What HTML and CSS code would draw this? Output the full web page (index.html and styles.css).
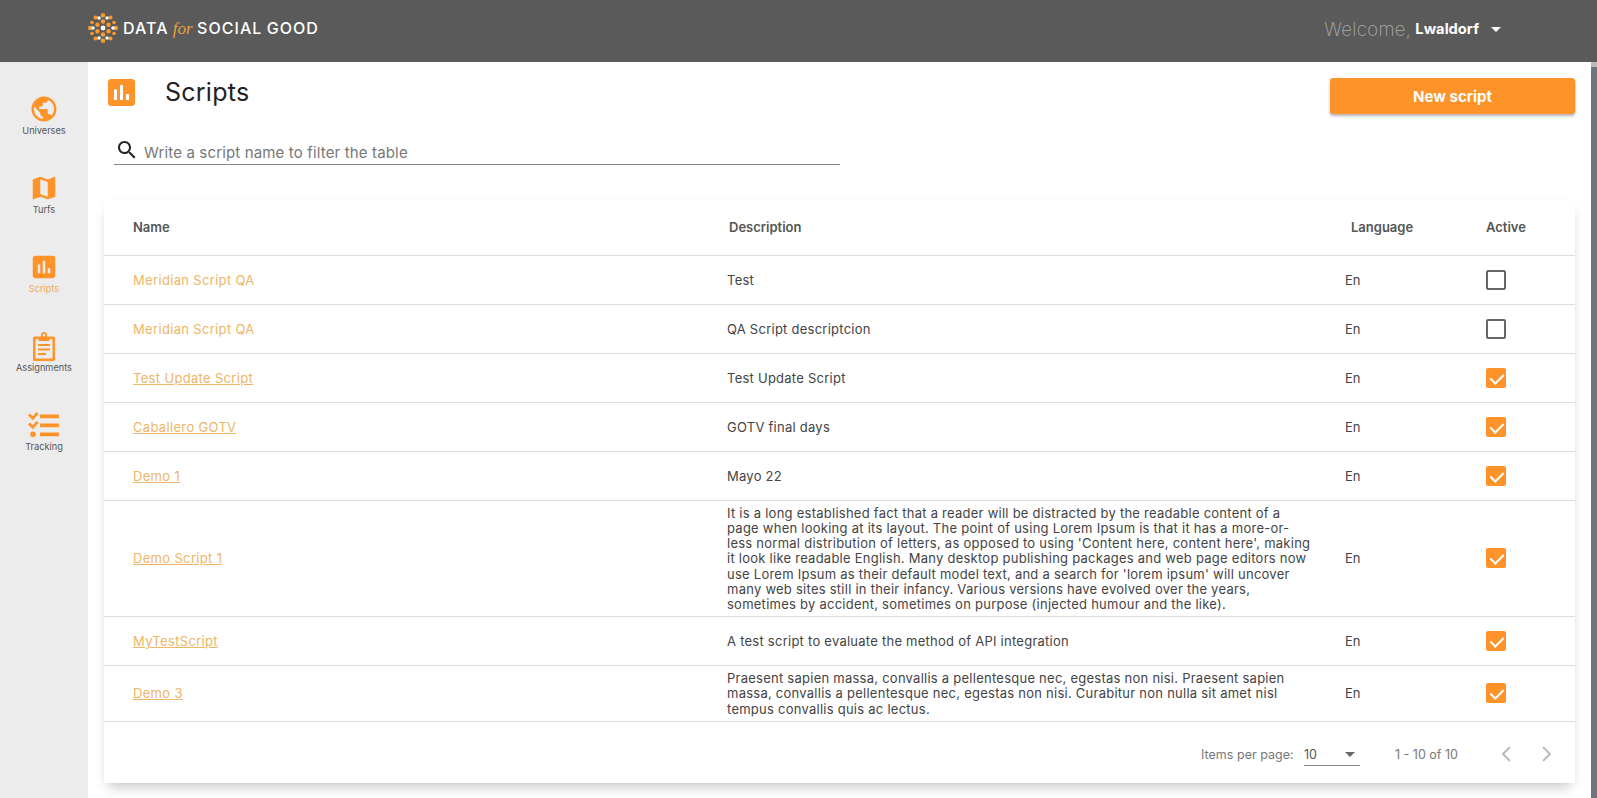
FILE: index.html
```html
<!DOCTYPE html>
<html lang="en">
<head>
<meta charset="utf-8">
<title>Scripts</title>
<link rel="stylesheet" href="styles.css">
</head>
<body>
<header class="topbar">
  <div class="brand">
    <svg class="brand-mark" viewBox="0 0 30 30" aria-hidden="true">
      <g fill="#fd9a2b">
        <circle cx="15" cy="2.200" r="2.200"/><circle cx="15" cy="27.800" r="2.200"/><circle cx="2.200" cy="15" r="2.200"/><circle cx="27.800" cy="15" r="2.200"/>
        <circle cx="7.500" cy="4.500" r="2"/><circle cx="22.500" cy="4.500" r="2"/><circle cx="7.500" cy="25.500" r="2"/><circle cx="22.500" cy="25.500" r="2"/>
        <circle cx="4" cy="9.500" r="1.800"/><circle cx="26" cy="9.500" r="1.800"/><circle cx="4" cy="20.500" r="1.800"/><circle cx="26" cy="20.500" r="1.800"/>
        <circle cx="15" cy="8.500" r="2.200"/><circle cx="15" cy="21.500" r="2.200"/><circle cx="9.500" cy="11.800" r="2.200"/><circle cx="20.500" cy="11.800" r="2.200"/><circle cx="9.500" cy="18.200" r="2.200"/><circle cx="20.500" cy="18.200" r="2.200"/>
      </g>
      <g fill="#fff">
        <circle cx="15" cy="15" r="2.400"/>
        <circle cx="11" cy="5" r="1.800"/><circle cx="19" cy="5" r="1.800"/><circle cx="11" cy="25" r="1.800"/><circle cx="19" cy="25" r="1.800"/>
        <circle cx="5" cy="15" r="1.800"/><circle cx="25" cy="15" r="1.800"/>
      </g>
    </svg>
    <span class="brand-name">DATA <em class="brand-for">for</em> SOCIAL GOOD</span>
  </div>
  <div class="user">
    <span class="welcome">Welcome,</span>
    <strong class="user-name">Lwaldorf</strong>
    <span class="caret"></span>
  </div>
</header>
<div class="shell">
  <nav class="sidenav">
    <a class="nav-item">
      <svg class="nav-icon" viewBox="0 0 24 24"><path d="M12 2C6.480 2 2 6.480 2 12s4.480 10 10 10 10-4.480 10-10S17.520 2 12 2zm-1 17.930c-3.950-.49-7-3.850-7-7.930 0-.62.08-1.210.21-1.790L9 15v1c0 1.100.9 2 2 2v1.930zm6.900-2.540c-.26-.81-1-1.390-1.900-1.390h-1v-3c0-.55-.45-1-1-1H8v-2h2c.55 0 1-.45 1-1V7h2c1.100 0 2-.9 2-2v-.41c2.930 1.190 5 4.060 5 7.410 0 2.080-.8 3.970-2.100 5.390z"/></svg>
      <span>Universes</span>
    </a>
    <a class="nav-item">
      <svg class="nav-icon" viewBox="0 0 24 24"><path d="M20.500 3l-.16.03L15 5.100 9 3 3.360 4.900c-.21.07-.36.25-.36.48V20.500c0 .28.22.5.5.5l.16-.03L9 18.900l6 2.100 5.640-1.900c.21-.07.36-.25.36-.48V3.500c0-.28-.22-.5-.5-.5zM15 19l-6-2.110V5l6 2.110V19z"/></svg>
      <span>Turfs</span>
    </a>
    <a class="nav-item nav-item-active">
      <svg class="nav-icon" viewBox="0 0 24 24"><path d="M19 3H5c-1.100 0-2 .9-2 2v14c0 1.100.9 2 2 2h14c1.100 0 2-.9 2-2V5c0-1.100-.9-2-2-2zM9 17H7v-7h2v7zm4 0h-2V7h2v10zm4 0h-2v-4h2v4z"/></svg>
      <span>Scripts</span>
    </a>
    <a class="nav-item">
      <svg class="nav-icon" viewBox="0 0 30 30"><path d="M12 5.500V4a3 3 0 0 1 6 0v1.500h6a2 2 0 0 1 2 2v21a1.500 1.500 0 0 1-1.500 1.500h-19A1.500 1.500 0 0 1 4 28.500v-21a2 2 0 0 1 2-2zM6.500 8v19.500h17V8h-3v2h-11V8zM15 2.800a1.400 1.400 0 1 0 0 2.800 1.400 1.400 0 0 0 0-2.800zM9 13h12v2H9zm0 4.500h12v2H9zM9 22h8v2H9z"/></svg>
      <span>Assignments</span>
    </a>
    <a class="nav-item">
      <svg class="nav-icon nav-icon-wide" viewBox="0 0 31 25"><path d="M12 2.500h19v3.800H12zM12 11.500h19v3.800H12zM12 20.500h19v3.800H12z"/><path d="M0 3.500 2 1.500l2.800 2.800L8.500 0l2 1.900-5.600 6.300zM0 12.500l2-2 2.800 2.800L8.500 9l2 1.900-5.600 6.300z"/><circle cx="5" cy="22.400" r="2.800"/></svg>
      <span>Tracking</span>
    </a>
  </nav>
  <main class="content">
    <div class="page-head">
      <div class="page-title">
        <svg class="title-icon" viewBox="3 3 18 18"><path d="M19 3H5c-1.100 0-2 .9-2 2v14c0 1.100.9 2 2 2h14c1.100 0 2-.9 2-2V5c0-1.100-.9-2-2-2zM9 17H7v-7h2v7zm4 0h-2V7h2v10zm4 0h-2v-4h2v4z"/></svg>
        <h1>Scripts</h1>
      </div>
      <button class="primary-btn">New script</button>
    </div>
    <div class="filter">
      <svg class="filter-icon" viewBox="0 0 24 24"><path d="M15.500 14h-.79l-.28-.27C15.410 12.590 16 11.110 16 9.500 16 5.910 13.090 3 9.500 3S3 5.910 3 9.500 5.910 16 9.500 16c1.610 0 3.090-.59 4.230-1.570l.27.28v.79l5 4.990L20.490 19l-4.990-5zm-6 0C7.010 14 5 11.990 5 9.500S7.010 5 9.500 5 14 7.010 14 9.500 11.990 14 9.500 14z"/></svg>
      <span class="filter-text">Write a script name to filter the table</span>
    </div>
    <section class="card">
      <table class="scripts">
        <thead>
          <tr><th class="c-name">Name</th><th class="c-desc c-desc-head">Description</th><th class="c-lang c-lang-head">Language</th><th class="c-active">Active</th></tr>
        </thead>
        <tbody>
          <tr><td><a class="link link-plain">Meridian Script QA</a></td><td>Test</td><td>En</td><td><span class="check"></span></td></tr>
          <tr><td><a class="link link-plain">Meridian Script QA</a></td><td>QA Script descriptcion</td><td>En</td><td><span class="check"></span></td></tr>
          <tr><td><a class="link">Test Update Script</a></td><td>Test Update Script</td><td>En</td><td><span class="check check-on"></span></td></tr>
          <tr><td><a class="link">Caballero GOTV</a></td><td>GOTV final days</td><td>En</td><td><span class="check check-on"></span></td></tr>
          <tr><td><a class="link">Demo 1</a></td><td>Mayo 22</td><td>En</td><td><span class="check check-on"></span></td></tr>
          <tr class="row-long"><td><a class="link">Demo Script 1</a></td><td>It is a long established fact that a reader will be distracted by the readable content of a<br>page when looking at its layout. The point of using Lorem Ipsum is that it has a more-or-<br>less normal distribution of letters, as opposed to using 'Content here, content here', making<br>it look like readable English. Many desktop publishing packages and web page editors now<br>use Lorem Ipsum as their default model text, and a search for 'lorem ipsum' will uncover<br>many web sites still in their infancy. Various versions have evolved over the years,<br>sometimes by accident, sometimes on purpose (injected humour and the like).</td><td>En</td><td><span class="check check-on"></span></td></tr>
          <tr><td><a class="link">MyTestScript</a></td><td>A test script to evaluate the method of API integration</td><td>En</td><td><span class="check check-on"></span></td></tr>
          <tr class="row-last"><td><a class="link">Demo 3</a></td><td>Praesent sapien massa, convallis a pellentesque nec, egestas non nisi. Praesent sapien<br>massa, convallis a pellentesque nec, egestas non nisi. Curabitur non nulla sit amet nisl<br>tempus convallis quis ac lectus.</td><td>En</td><td><span class="check check-on"></span></td></tr>
        </tbody>
      </table>
      <div class="pager">
        <span class="pager-label">Items per page:</span>
        <div class="pager-select"><span>10</span><span class="pager-caret"></span></div>
        <span class="pager-range">1 - 10 of 10</span>
        <svg class="pager-arrow" viewBox="0 0 12 18"><path d="M10 2 3 9l7 7"/></svg>
        <svg class="pager-arrow pager-arrow-next" viewBox="0 0 12 18"><path d="M2 2l7 7-7 7"/></svg>
      </div>
    </section>
  </main>
  <div class="scrollbar"><div class="scroll-cap"></div></div>
</div>
</body>
</html>
```
FILE: styles.css
```css
* { box-sizing: border-box; }
html, body { margin: 0; height: 100%; overflow: hidden; }
body { font-family: Inter, "Noto Sans", sans-serif; color: #333; background: #fff; display: flex; flex-direction: column; }

.topbar { height: 62px; flex: none; background: #5a5a5a; display: flex; align-items: center; justify-content: space-between; padding: 0 96px 0 88px; }
.brand { display: flex; align-items: center; gap: 5px; margin-top: -6px; }
.brand-mark { width: 30px; height: 30px; }
.brand-name { color: #fff; font-size: 16px; font-weight: 500; letter-spacing: 1.05px; white-space: nowrap; word-spacing: -1px; }
.brand-for { color: #e9a13b; font-family: "Liberation Serif", serif; font-weight: 400; font-size: 17px; letter-spacing: 0; }
.user { display: flex; align-items: center; gap: 4px; margin-top: -4px; }
.welcome { color: #aaa; font-size: 18.500px; font-weight: 200; letter-spacing: .35px; }
.user-name { color: #fff; font-size: 14.700px; font-weight: 700; }
.caret { margin-left: 8px; border: 5px solid transparent; border-top: 5px solid #fff; border-bottom: 0; }

.shell { flex: 1; min-height: 0; display: flex; }
.sidenav { width: 88px; flex: none; background: #ececec; display: flex; flex-direction: column; align-items: center; padding-top: 27px; gap: 31px; }
.nav-item { height: 48px; display: flex; flex-direction: column; align-items: center; justify-content: flex-end; font-size: 9.200px; line-height: 12px; color: #555; }
.nav-item-active { color: #f0a860; }
.nav-icon { width: 30px; height: 30px; fill: #fd9329; margin-bottom: 1px; flex: none; }
.nav-icon-wide { width: 31px; height: 25px; margin: 2px 0 4px; }

.content { flex: 1; min-width: 0; padding: 16px 16px 0 16px; }
.page-head { display: flex; justify-content: space-between; align-items: flex-start; height: 62px; }
.page-title { display: flex; align-items: center; padding: 1px 0 0 4px; }
.title-icon { width: 27px; height: 27px; fill: #fd9329; }
.page-title h1 { margin: 0 0 0 30px; font-size: 25px; line-height: 27px; font-weight: 400; color: #222; letter-spacing: .25px; }
.primary-btn { width: 245px; height: 36px; border: 0; border-radius: 3px; background: #fd9329; color: #fff; font: 700 15px Inter, sans-serif; box-shadow: 0 2px 3px rgba(0,0,0,.3); }

.filter { width: 726px; height: 25px; margin-left: 10px; display: flex; align-items: center; gap: 5px; border-bottom: 1px solid #8a8a8a; padding: 1px 0 1px 1px; }
.filter-icon { width: 24px; height: 24px; fill: #222; margin-top: -5px; }
.filter-text { color: #777; font-size: 15px; letter-spacing: .15px; }

.card { margin: 35px 0 0 0; height: 583px; background: #fff; box-shadow: 0 8px 12px -4px rgba(0,0,0,.22), 0 0 4px rgba(0,0,0,.02); }
.scripts { width: 100%; border-collapse: collapse; table-layout: fixed; font-size: 13px; color: #444; }
.scripts th { height: 55px; padding: 0; text-align: left; font-weight: 600; font-size: 13px; color: #555; border-bottom: 1px solid #ddd; }
.scripts td { height: 49px; padding: 0; border-bottom: 1px solid #ddd; vertical-align: middle; line-height: 15.200px; }
.scripts td:not(:last-child) { padding-top: 2px; }
.c-name { width: 623px; padding-left: 29px !important; }
.c-desc { width: 618px; }
.c-desc-head { padding-left: 2px !important; }
.c-lang { width: 141px; }
.c-lang-head { padding-left: 6px !important; }
.scripts td:first-child { padding-left: 29px; }
.scripts td:nth-child(2) { letter-spacing: .25px; white-space: nowrap; }
.row-long td { height: 116px; }
.row-last td { height: 56px; }
.link { color: #eeb566; letter-spacing: .33px; text-decoration: underline; }
.link-plain { text-decoration: none; }
.check { display: block; width: 20px; height: 20px; border: 2px solid #666; border-radius: 2px; }
.check-on { position: relative; border: 0; background: #fd9329; }
.check-on::after { content: ""; position: absolute; left: 7px; top: 3px; width: 6px; height: 11px; border: solid #fff; border-width: 0 2px 2px 0; transform: rotate(45deg); }

.pager { height: 62px; display: flex; align-items: center; padding: 3px 0 0 1097px; font-size: 12.500px; color: #777; }
.pager > * { flex: none; }
.pager-label { width: 103px; letter-spacing: .02px; white-space: nowrap; }
.pager-select { width: 56px; height: 22px; display: flex; justify-content: space-between; align-items: center; border-bottom: 1px solid #888; color: #555; padding: 0 3px 0 0; margin-top: 2px; }
.pager-caret { border: 5px solid transparent; border-top: 5px solid #666; border-bottom: 0; margin-right: 2px; }
.pager-range { width: 105px; margin-left: 35px; white-space: nowrap; }
.pager-arrow { width: 12px; height: 18px; fill: none; stroke: #bbb; stroke-width: 2; }
.pager-arrow-next { margin-left: 29px; }

.scrollbar { width: 6px; flex: none; background: #6c757d; }
.scroll-cap { height: 5px; background: #bbb; }
```
